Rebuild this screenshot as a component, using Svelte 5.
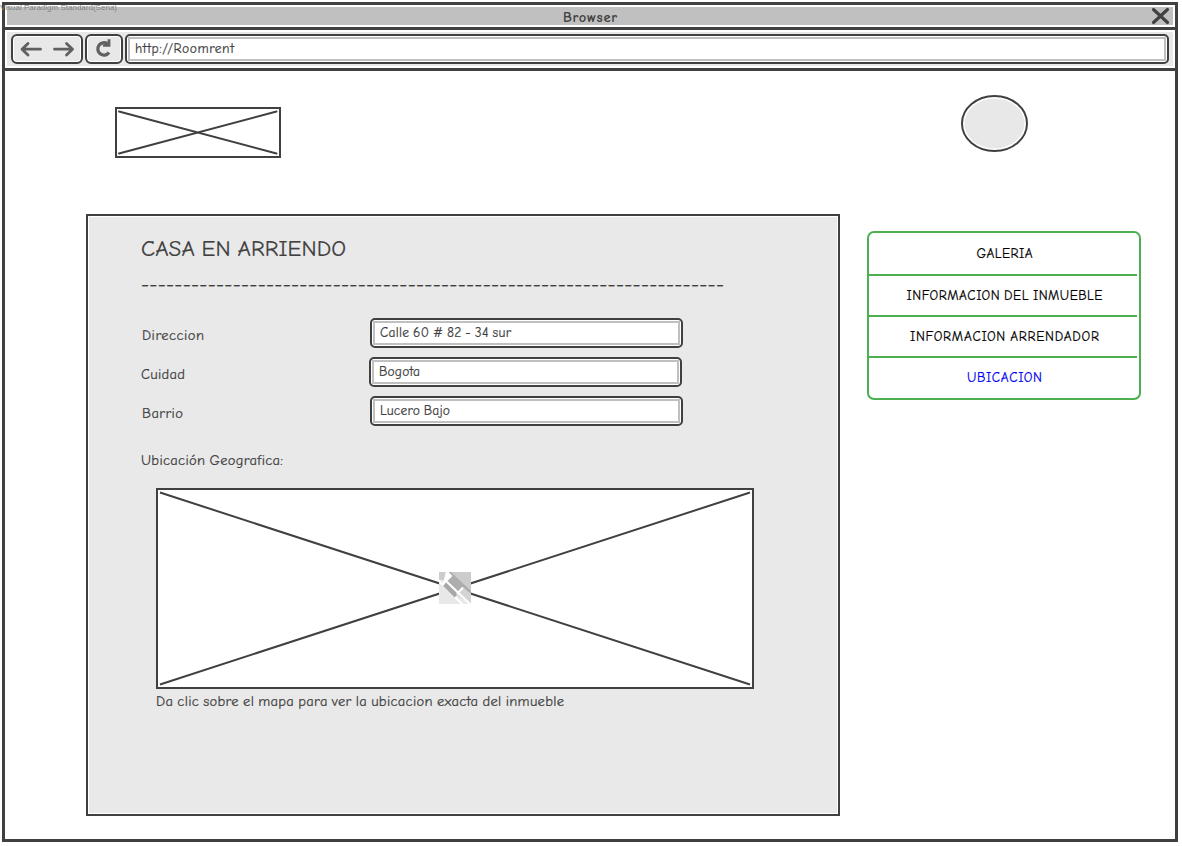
<script>
  const fields = [
    { label: 'Direccion', lw: 62, value: 'Calle 60 # 82 - 34 sur', vw: 131, shift: true },
    { label: 'Cuidad', lw: 44, value: 'Bogota', vw: 41, shift: false },
    { label: 'Barrio', lw: 41, value: 'Lucero Bajo', vw: 70, shift: true }
  ];
  const menu = [
    { text: 'GALERIA', w: 56 },
    { text: 'INFORMACION DEL INMUEBLE', w: 196 },
    { text: 'INFORMACION ARRENDADOR', w: 189 },
    { text: 'UBICACION', w: 75, active: true }
  ];
  const rule = '-'.repeat(70);

  // Spreads the letters so that the line takes the given width.
  function fit(node, width) {
    const apply = () => {
      node.style.letterSpacing = '0px';
      node.style.marginRight = '0px';
      const natural = node.getBoundingClientRect().width;
      const gap = (width - natural) / (node.textContent.length - 1);
      node.style.letterSpacing = gap + 'px';
      node.style.marginRight = -gap + 'px';
    };
    apply();
    document.fonts?.ready.then(apply);
  }
</script>

<div class="page">
  <div class="watermark"><span use:fit={117}>Visual Paradigm Standard(Sena)</span></div>
  <div class="window">
    <header class="titlebar">
      <b use:fit={54}>Browser</b>
      <svg class="close" width="18" height="18" viewBox="0 0 18 18"><path d="M2.5 2.5 L16.5 15.5 M16.5 2.5 L2.5 15.5" /></svg>
    </header>
    <nav class="toolbar">
      <div class="btn arrows">
        <svg width="66" height="24" viewBox="0 0 66 24">
          <path d="M26.5 12.2H8.5M14 6.5L8 12.2L14 18M40.5 12.2H58.5M52.5 6.5L58.5 12.2L52.5 18" />
        </svg>
      </div>
      <div class="btn reload">
        <svg width="32" height="24" viewBox="0 0 32 24">
          <path class="arc" d="M21 15.6A6.2 6.2 0 1 1 19.5 6.8" />
          <path class="tip" d="M22.4 2.2V9.8H15V7.4L19.6 6.6V2.2Z" />
        </svg>
      </div>
      <div class="field url"><div><span use:fit={99}>http://Roomrent</span></div></div>
    </nav>

    <main>
      <div class="brand">
        <svg class="logo" width="166" height="51" viewBox="0 0 166 51">
          <rect x="1" y="1" width="164" height="49" />
          <path d="M4 4.5L161.5 46.5M4 46.5L161.5 4.5" />
        </svg>
        <svg class="avatar" width="68" height="58" viewBox="0 0 68 58">
          <ellipse class="ring" cx="33.5" cy="28.5" rx="32.5" ry="27.5" />
          <ellipse class="disc" cx="33.5" cy="28.5" rx="30" ry="25" />
        </svg>
      </div>

      <div class="columns">
        <section class="panel">
          <h1><span use:fit={205}>CASA EN ARRIENDO</span></h1>
          <div class="rule"><span use:fit={583}>{rule}</span></div>
          <div class="form">
            {#each fields as f}
              <div class="row">
                <div class="label" class:near={!f.shift}><span use:fit={f.lw}>{f.label}</span></div>
                <div class="field" class:shift={f.shift}><div><span use:fit={f.vw}>{f.value}</span></div></div>
              </div>
            {/each}
          </div>
          <p class="geo"><span use:fit={142}>Ubicación Geografica:</span></p>
          <svg class="map" width="598" height="201" viewBox="0 0 598 201">
            <rect x="1" y="1" width="596" height="199" />
            <path d="M4 4.5L594 196.5M4 196.5L594 4.5" />
            <svg x="283" y="84" width="32" height="32" viewBox="0 0 32 32">
              <path d="M0 0H32V32H0Z" fill="#e8e8e8" stroke="none" />
              <path d="M0 0H32V22L22 16L9 8L0 8Z" fill="#cccccc" stroke="none" />
              <path d="M9 0H12L32 19V22L24 15L17 23L6 11L12 4Z" fill="#adadad" stroke="none" />
              <path d="M24 16L32 23V32L17 23Z" fill="#d4d4d4" stroke="none" />
              <path d="M-1 8L25 34M7 -1L12 4L4 12M7 9L32 33M16 24L24 15.5" stroke="#fff" stroke-width="2" />
              <path d="M5.5 12.5L17 24" stroke="#a8a8a8" stroke-width="4" stroke-linecap="butt" />
            </svg>
          </svg>
          <p class="hint"><span use:fit={408}>Da clic sobre el mapa para ver la ubicacion exacta del inmueble</span></p>
        </section>

        <aside>
          {#each menu as m}
            <div class="item" class:active={m.active}><span use:fit={m.w}>{m.text}</span></div>
          {/each}
        </aside>
      </div>
    </main>
  </div>
</div>

<style>
  :global(body) { margin: 0; background: #fff; }
  * { box-sizing: border-box; }
  .page {
    position: relative; width: 1182px; height: 846px; padding: 2px 4px 4px 2px; overflow: hidden;
    font-family: "Comic Sans MS", "Comic Neue", "Noto Sans", sans-serif; font-size: 14px; color: #404040;
    font-variant-ligatures: none; word-spacing: -1px; -webkit-text-stroke: 0.2px currentColor;
  }
  span, b { display: inline-block; white-space: pre; }
  .watermark {
    position: absolute; left: 0; top: 3px; z-index: 2; word-spacing: 0;
    font: 8px/10px "Liberation Sans", sans-serif; color: #808080; -webkit-text-stroke: 0;
  }
  .window { width: 1176px; height: 840px; border: 3px solid #404040; display: flex; flex-direction: column; }
  .titlebar {
    height: 25px; flex: none; border-bottom: 3px solid #404040; background: #c0c0c0; box-shadow: inset 0 0 0 2px #fff;
    display: grid; grid-template-columns: 558px 1fr auto; padding-right: 6px; line-height: 25px; font-size: 14.5px;
    -webkit-text-stroke: 0;
  }
  .titlebar b { grid-column: 2; justify-self: start; }
  .close { margin-top: 2px; }
  .close path { stroke: #404040; stroke-width: 3.1; stroke-linecap: round; fill: none; }
  .toolbar {
    height: 41px; flex: none; border-bottom: 3px solid #404040; background: #e8e8e8; box-shadow: inset 0 0 0 2px #fff;
    display: flex; gap: 2px; padding: 4px 6px;
  }
  .btn { height: 30px; border: 2px solid #404040; border-radius: 6px; background: #e8e8e8; box-shadow: inset 0 0 0 1px #fff; padding: 1px; }
  .arrows { width: 72px; }
  .reload { width: 38px; }
  .btn svg { display: block; }
  .btn path { fill: none; stroke: #606060; stroke-width: 2.8; stroke-linecap: round; stroke-linejoin: round; }
  .btn .arc { stroke-width: 3.3; stroke-linecap: butt; }
  .btn .tip { fill: #606060; stroke: none; }
  .field { height: 30px; border: 2px solid #404040; border-radius: 5px; background: #fff; padding: 1px; }
  .field > div { height: 24px; border: 2px solid #c0c0c0; padding-left: 5px; line-height: 19px; font-size: 13.5px; }
  .url { flex: 1; }
  .url > div { line-height: 20px; }
  .brand { height: 143px; display: flex; justify-content: space-between; align-items: flex-start; padding: 24px 146px 0 110px; }
  .logo { margin-top: 12px; }
  .logo, .map { display: block; fill: #fff; stroke: #404040; stroke-width: 2; }
  .logo path { stroke-linecap: round; }
  .ring { fill: #fff; stroke: #404040; stroke-width: 2; }
  .disc { fill: #e8e8e8; }
  .columns { display: flex; align-items: flex-start; gap: 27px; padding-left: 81px; }
  .panel { width: 754px; height: 602px; border: 2px solid #404040; background: #e9e9e9; box-shadow: inset 0 0 0 1px #fff; padding: 18px 0 0 53px; }
  h1, p { margin: 0; font-weight: 400; }
  h1 { font-size: 23px; line-height: 30px; height: 30px; }
  .rule { font-size: 20px; line-height: 30px; height: 30px; margin-top: 6px; }
  .form { display: flex; flex-direction: column; gap: 9px; margin-top: 18px; }
  .row { display: flex; height: 30px; }
  .label { width: 228px; padding-left: 1px; line-height: 36px; font-size: 14.5px; }
  .label.near { padding-left: 0; }
  .field.shift { margin-left: 1px; }
  .row .field { width: 313px; }
  .geo { margin-top: 24px; height: 20px; line-height: 21px; font-size: 14.5px; }
  .map { margin: 18px 0 0 15px; }
  .hint { margin: 2px 0 0 15px; line-height: 21px; font-size: 14.5px; }
  aside { width: 274px; height: 169px; margin-top: 17px; border: 2px solid #4caf50; border-radius: 7px; padding-right: 2px; color: #000; font-size: 13.5px; }
  .item { height: 41px; border-bottom: 2px solid #4caf50; text-align: center; line-height: 40px; padding-left: 3px; }
  .item:first-child { height: 43px; line-height: 41px; }
  .item:last-child { border: 0; }
  .active { color: #0000f0; }
</style>
